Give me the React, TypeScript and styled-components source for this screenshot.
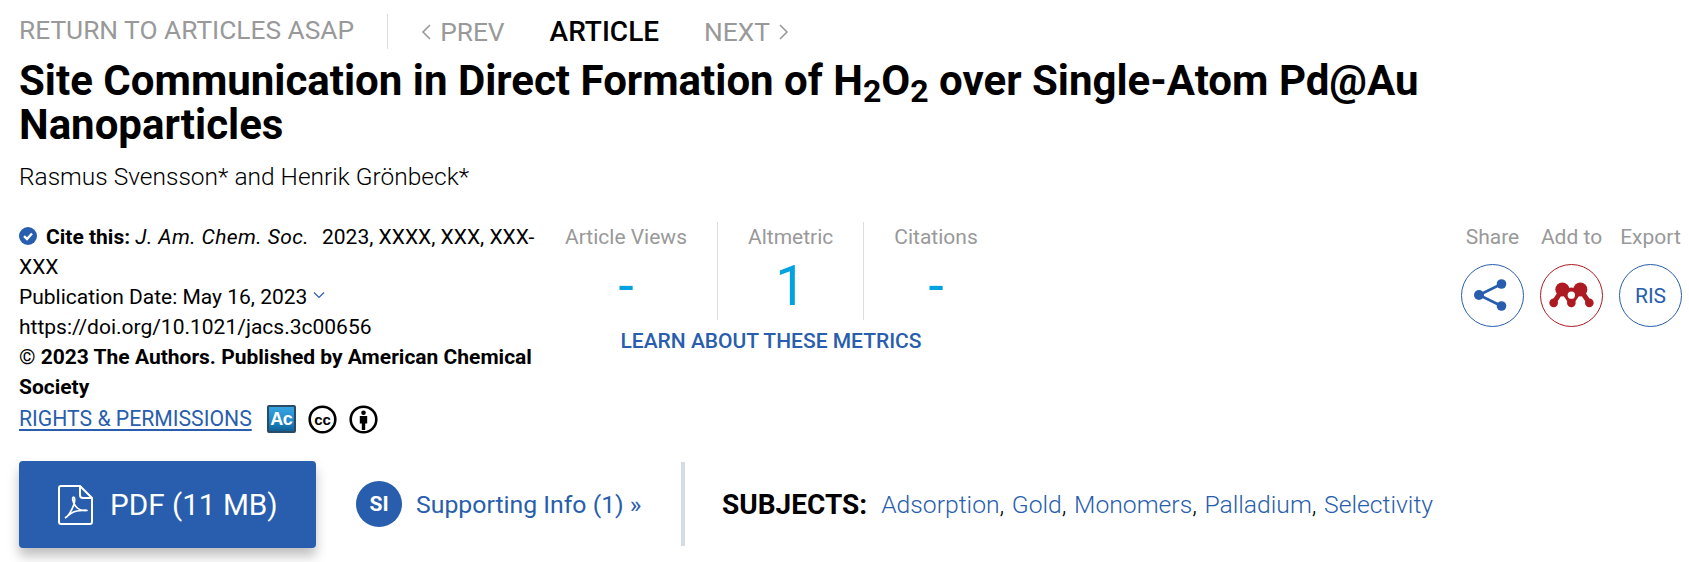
import React from "react";
import styled, { createGlobalStyle } from "styled-components";

const Global = createGlobalStyle`
  html, body { margin: 0; padding: 0; background: #fff; }
  body { font-family: Roboto, "Liberation Sans", sans-serif; color: #000; }
`;
const BLUE = "#285ead";
const Page = styled.div`
  width: 1689px;
  height: 562px;
  box-sizing: border-box;
  padding: 14px 7px 0 19px;
  overflow: hidden;
`;
const Nav = styled.nav`
  display: flex;
  align-items: center;
  height: 35px;
  font-size: 26.3px;
  color: #999;
`;
const ReturnLink = styled.span`
  padding-right: 33px;
  height: 35px;
  line-height: 32px;
  border-right: 1px solid #ddd;
  margin-right: 33px;
`;
const NavItem = styled.span<{ $active?: boolean }>`
  display: flex;
  align-items: center;
  gap: 8px;
  line-height: 32px;
  height: 35px;
  margin-right: 45px;
  color: ${(p) => (p.$active ? "#000" : "#999")};
  font-size: ${(p) => (p.$active ? "28px" : "26.3px")};
  font-weight: ${(p) => (p.$active ? 500 : 400)};
`;
const Title = styled.h1`
  margin: 10px 0 0;
  font-size: 42px;
  line-height: 44px;
  font-weight: 700;
  width: 1480px;
  sub { font-size: 32px; line-height: 0; vertical-align: -7px; }
`;
const Authors = styled.div`
  margin-top: 15px;
  font-size: 24.5px;
  font-weight: 300;
  line-height: 30px;
`;
const Middle = styled.div`
  display: flex;
  align-items: flex-start;
  margin-top: 30px;
`;
const CiteColumn = styled.div`
  width: 518px;
  flex: none;
  font-size: 21px;
  line-height: 30px;
`;
const CiteIcon = styled.svg`
  width: 18px;
  height: 18px;
  margin-right: 9px;
  vertical-align: -1px;
`;
const Journal = styled.i`
  letter-spacing: 0.4px;
  margin-right: 13px;
`;
const Strong = styled.b`
  font-weight: 700;
`;
const Blue = styled.svg`
  width: 14px;
  height: 14px;
  margin-left: 5px;
  vertical-align: 2px;
`;
const RightsRow = styled.div`
  display: flex;
  align-items: center;
  height: 30px;
  gap: 12px;
  margin-top: 2px;
`;
const RightsLink = styled.a`
  color: ${BLUE};
  font-size: 21.2px;
  text-decoration: underline;
  text-decoration-thickness: 2px;
  text-underline-offset: 3px;
  margin-right: 3px;
`;
const AcBadge = styled.span`
  width: 29px;
  height: 28px;
  box-sizing: border-box;
  border: 2px solid #2b4a63;
  border-radius: 2px;
  background: linear-gradient(#36a4e0 0%, #1f87c8 60%, #0f5f94 100%);
  color: #fff;
  font-family: "Liberation Sans", sans-serif;
  font-weight: 700;
  font-size: 18px;
  line-height: 24px;
  text-align: center;
  letter-spacing: -0.5px;
`;
const Lic = styled.svg`
  width: 29px;
  height: 29px;
  flex: none;
`;
const Metrics = styled.div`
  flex: none;
  width: 470px;
`;
const MetricRow = styled.div`
  display: flex;
`;
const Metric = styled.div<{ $last?: boolean }>`
  height: 98px;
  padding: 0 30px;
  box-sizing: border-box;
  text-align: center;
  white-space: nowrap;
  border-right: ${(p) => (p.$last ? "none" : "1px solid #ddd")};
  &:first-child { padding-left: 28px; }
`;
const MetricLabel = styled.div`
  font-size: 21px;
  line-height: 30px;
  color: #999;
`;
const MetricValue = styled.div`
  font-size: 55px;
  line-height: 60px;
  color: #00a3e0;
  margin-top: 4px;
`;
const LearnLink = styled.a`
  display: block;
  text-align: center;
  font-size: 21px;
  font-weight: 500;
  color: ${BLUE};
  line-height: 30px;
  margin: 6px 0 0;
  padding-right: 2px;
`;
const Actions = styled.div`
  margin-left: auto;
  display: flex;
  gap: 16px;
`;
const Action = styled.div`
  width: 63px;
  display: flex;
  flex-direction: column;
  align-items: center;
`;
const ActionLabel = styled.div`
  font-size: 21px;
  line-height: 30px;
  color: #999;
  white-space: nowrap;
`;
const Ring = styled.div<{ $color: string }>`
  width: 63px;
  height: 63px;
  box-sizing: border-box;
  margin-top: 12px;
  border: 1px solid ${(p) => p.$color};
  border-radius: 50%;
  color: ${(p) => p.$color};
  display: flex;
  align-items: center;
  justify-content: center;
  font-size: 21px;
`;
const Bottom = styled.div`
  display: flex;
  align-items: flex-start;
  margin-top: 27px;
`;
const PdfButton = styled.a`
  width: 297px;
  height: 87px;
  box-sizing: border-box;
  padding-left: 39px;
  border-radius: 4px;
  background: ${BLUE};
  box-shadow: 0 8px 12px rgba(0, 0, 0, 0.25);
  color: #fff;
  font-size: 29.7px;
  display: flex;
  align-items: center;
  gap: 17px;
`;
const SupportLink = styled.a`
  margin: 20px 0 0 40px;
  height: 46px;
  display: flex;
  align-items: center;
  gap: 14px;
  color: ${BLUE};
  font-size: 24.8px;
  width: 325px;
  flex: none;
`;
const SiBadge = styled.span`
  width: 46px;
  height: 46px;
  border-radius: 50%;
  background: ${BLUE};
  color: #fff;
  font-size: 21px;
  font-weight: 700;
  display: flex;
  align-items: center;
  justify-content: center;
  flex: none;
`;
const Subjects = styled.div`
  height: 84px;
  margin-top: 1px;
  border-left: 4px solid #d4dde4;
  padding-left: 37px;
  display: flex;
  align-items: center;
  font-size: 24.7px;
`;
const SubjectsLabel = styled.b`
  font-weight: 700;
  font-size: 28px;
  margin-right: 14px;
`;
const SubjectLink = styled.a`
  color: ${BLUE};
  font-weight: 300;
`;
const Comma = styled.span`
  font-weight: 300;
  margin-right: 7.5px;
`;

const subjects = ["Adsorption", "Gold", "Monomers", "Palladium", "Selectivity"];

export default function App() {
  return (
    <Page>
      <Global />
      <Nav>
        <ReturnLink>RETURN TO ARTICLES ASAP</ReturnLink>
        <NavItem>
          <svg width="11" height="18" viewBox="0 0 11 18" fill="none" stroke="#999" strokeWidth="1.6">
            <path d="M9 2 2 9l7 7" />
          </svg>
          PREV
        </NavItem>
        <NavItem $active>ARTICLE</NavItem>
        <NavItem>
          NEXT
          <svg width="11" height="18" viewBox="0 0 11 18" fill="none" stroke="#999" strokeWidth="1.6">
            <path d="m2 2 7 7-7 7" />
          </svg>
        </NavItem>
      </Nav>
      <Title>
        Site Communication in Direct Formation of H<sub>2</sub>O<sub>2</sub> over Single-Atom Pd@Au Nanoparticles
      </Title>
      <Authors>Rasmus Svensson* and Henrik Grönbeck*</Authors>
      <Middle>
        <CiteColumn>
          <div>
            <CiteIcon viewBox="0 0 18 18">
              <circle cx="9" cy="9" r="9" fill={BLUE} />
              <path d="M5 9.2 8 12l5-5.5" fill="none" stroke="#fff" strokeWidth="2.4" />
            </CiteIcon>
            <Strong>Cite this:</Strong> <Journal>J. Am. Chem. Soc.</Journal>2023, XXXX, XXX, XXX-XXX
          </div>
          <div>
            Publication Date: May 16, 2023
            <Blue viewBox="0 0 14 14" fill="none" stroke={BLUE} strokeWidth="1.2">
              <path d="m2 4.5 5 5 5-5" />
            </Blue>
          </div>
          <div>https://doi.org/10.1021/jacs.3c00656</div>
          <div>
            © <Strong>2023 The Authors. Published by American Chemical Society</Strong>
          </div>
          <RightsRow>
            <RightsLink>RIGHTS &amp; PERMISSIONS</RightsLink>
            <AcBadge>Ac</AcBadge>
            <Lic viewBox="0 0 29 29">
              <circle cx="14.5" cy="14.5" r="12.8" fill="#fff" stroke="#000" strokeWidth="2.6" />
              <text x="14.5" y="19.5" textAnchor="middle" fontFamily="Liberation Sans, sans-serif" fontWeight="700" fontSize="15">cc</text>
            </Lic>
            <Lic viewBox="0 0 29 29">
              <circle cx="14.5" cy="14.5" r="12.8" fill="#fff" stroke="#000" strokeWidth="2.6" />
              <circle cx="14.5" cy="7.8" r="2.3" />
              <path d="M10.8 11h7.4v7.6h-2V25h-3.4v-6.4h-2z" />
            </Lic>
          </RightsRow>
        </CiteColumn>
        <Metrics>
          <MetricRow>
            <Metric>
              <MetricLabel>Article Views</MetricLabel>
              <MetricValue>-</MetricValue>
            </Metric>
            <Metric>
              <MetricLabel>Altmetric</MetricLabel>
              <MetricValue>1</MetricValue>
            </Metric>
            <Metric $last>
              <MetricLabel>Citations</MetricLabel>
              <MetricValue>-</MetricValue>
            </Metric>
          </MetricRow>
          <LearnLink>LEARN ABOUT THESE METRICS</LearnLink>
        </Metrics>
        <Actions>
          <Action>
            <ActionLabel>Share</ActionLabel>
            <Ring $color={BLUE}>
              <svg width="61" height="61" viewBox="0 0 61 61" fill={BLUE}>
                <circle cx="17" cy="30" r="5" />
                <circle cx="39.5" cy="19" r="4.8" />
                <circle cx="39.5" cy="41" r="4.8" />
                <path d="M39.5 19 17 30l22.5 11" fill="none" stroke={BLUE} strokeWidth="2.6" />
              </svg>
            </Ring>
          </Action>
          <Action>
            <ActionLabel>Add to</ActionLabel>
            <Ring $color="#ad1a22">
              <svg width="46" height="27" viewBox="0 0 138 80" fill="#ad1a22">
                <path d="M14 62 40 22 67 62 94 22 121 62" fill="none" stroke="#ad1a22" strokeWidth="15" />
                <circle cx="14" cy="62" r="13" />
                <circle cx="67" cy="62" r="13" />
                <circle cx="121" cy="62" r="13" />
                <circle cx="40" cy="22" r="21" />
                <circle cx="94" cy="22" r="21" />
                <circle cx="67" cy="36" r="20" />
                <circle cx="67" cy="39" r="11" fill="#fff" />
              </svg>
            </Ring>
          </Action>
          <Action>
            <ActionLabel>Export</ActionLabel>
            <Ring $color={BLUE}>RIS</Ring>
          </Action>
        </Actions>
      </Middle>
      <Bottom>
        <PdfButton>
          <svg width="35" height="40" viewBox="0 0 35 40" fill="none" stroke="#fff" strokeWidth="2">
            <path d="M22 1H3a2 2 0 0 0-2 2v34a2 2 0 0 0 2 2h29a2 2 0 0 0 2-2V13Z" />
            <path d="M22 1v9a3 3 0 0 0 3 3h9" />
            <path d="M7 33c3-1 7-8 9-14 1-4 1-7-.5-7s-1 5 2 9 8 5 11 4.500-9-.5-13 1.500-7 5-8.500 6Z" strokeWidth="1.7" />
          </svg>
          PDF (11 MB)
        </PdfButton>
        <SupportLink>
          <SiBadge>SI</SiBadge>
          Supporting Info (1) »
        </SupportLink>
        <Subjects>
          <SubjectsLabel>SUBJECTS:</SubjectsLabel>
          {subjects.map((s, i) => (
            <React.Fragment key={s}>
              <SubjectLink>{s}</SubjectLink>
              {i < subjects.length - 1 && <Comma>,</Comma>}
            </React.Fragment>
          ))}
        </Subjects>
      </Bottom>
    </Page>
  );
}
